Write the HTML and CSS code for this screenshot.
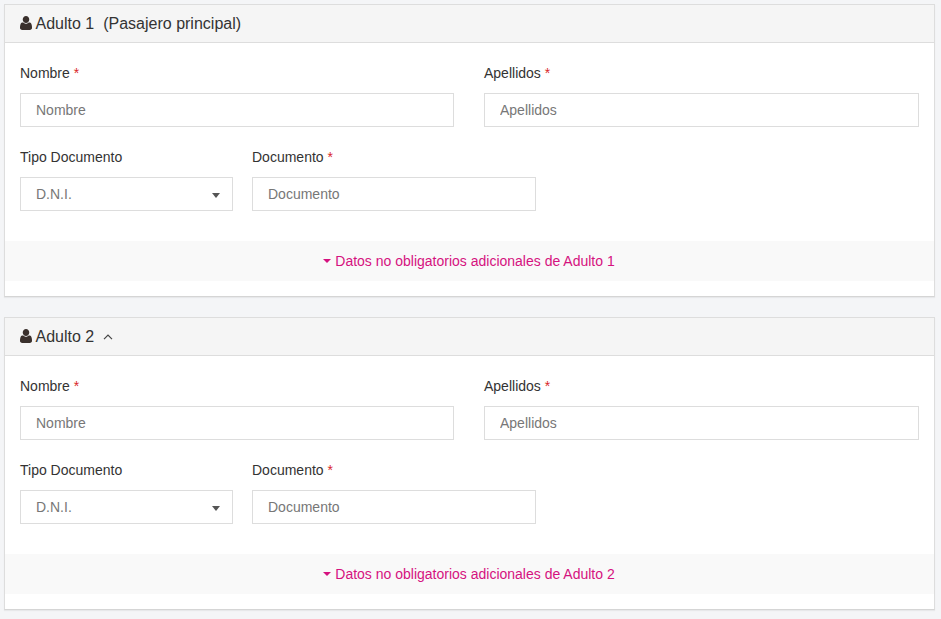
FILE: index.html
```html
<!DOCTYPE html>
<html lang="es">
<head>
  <meta charset="utf-8"/>
  <meta name="viewport" content="width=device-width, initial-scale=1.0"/>
  <title>Datos de pasajeros</title>
  <link rel="stylesheet" href="styles.css">
</head>
<body>
  <section class="passenger">
    <h3 class="passenger-title">
      <svg class="icon-user" viewBox="0 128 1408 1536" preserveAspectRatio="none"><path d="M1408 1405q0 120-73 189.5t-194 69.5h-874q-121 0-194-69.5t-73-189.5q0-53 3.5-103.5t14-109 26.5-108.5 43-97.5 62-81 85.5-53.5 111.5-20q9 0 42 21.5t74.5 48 108 48 133.5 21.5 133.5-21.5 108-48 74.5-48 42-21.5q61 0 111.5 20t85.5 53.5 62 81 43 97.5 26.5 108.5 14 109 3.5 103.5zm-320-893q0 159-112.5 271.5t-271.5 112.5-271.5-112.5-112.5-271.5 112.5-271.5 271.5-112.5 271.5 112.5 112.5 271.5z"/></svg>
      <span>Adulto 1</span>
      <span class="title-note">(Pasajero principal)</span>
    </h3>
    <div class="passenger-body">
      <div class="row-names">
        <div class="field">
          <label>Nombre <em>*</em></label>
          <input type="text" placeholder="Nombre"/>
        </div>
        <div class="field">
          <label>Apellidos <em>*</em></label>
          <input type="text" placeholder="Apellidos"/>
        </div>
      </div>
      <div class="row-doc">
        <div class="field">
          <label>Tipo Documento</label>
          <div class="select-box">D.N.I.<span class="select-caret"></span></div>
        </div>
        <div class="field">
          <label>Documento <em>*</em></label>
          <input type="text" placeholder="Documento"/>
        </div>
      </div>
    </div>
    <a class="extra-link" href="#"><span class="link-caret"></span>Datos no obligatorios adicionales de Adulto 1</a>
  </section>

  <section class="passenger">
    <h3 class="passenger-title">
      <svg class="icon-user" viewBox="0 128 1408 1536" preserveAspectRatio="none"><path d="M1408 1405q0 120-73 189.5t-194 69.5h-874q-121 0-194-69.5t-73-189.5q0-53 3.5-103.5t14-109 26.5-108.5 43-97.5 62-81 85.5-53.5 111.5-20q9 0 42 21.5t74.5 48 108 48 133.5 21.5 133.5-21.5 108-48 74.5-48 42-21.5q61 0 111.5 20t85.5 53.5 62 81 43 97.5 26.5 108.5 14 109 3.5 103.5zm-320-893q0 159-112.5 271.5t-271.5 112.5-271.5-112.5-112.5-271.5 112.5-271.5 271.5-112.5 271.5 112.5 112.5 271.5z"/></svg>
      <span>Adulto 2</span>
      <svg class="icon-chevron" viewBox="0 0 10 6"><path d="M1 5.2 5 1.2l4 4"/></svg>
    </h3>
    <div class="passenger-body">
      <div class="row-names">
        <div class="field">
          <label>Nombre <em>*</em></label>
          <input type="text" placeholder="Nombre"/>
        </div>
        <div class="field">
          <label>Apellidos <em>*</em></label>
          <input type="text" placeholder="Apellidos"/>
        </div>
      </div>
      <div class="row-doc">
        <div class="field">
          <label>Tipo Documento</label>
          <div class="select-box">D.N.I.<span class="select-caret"></span></div>
        </div>
        <div class="field">
          <label>Documento <em>*</em></label>
          <input type="text" placeholder="Documento"/>
        </div>
      </div>
    </div>
    <a class="extra-link" href="#"><span class="link-caret"></span>Datos no obligatorios adicionales de Adulto 2</a>
  </section>
</body>
</html>
```

FILE: styles.css
```css
body {
  margin: 0;
  padding: 4px 6px 9px 4px;
  font-family: "Liberation Sans", Arial, sans-serif;
  font-size: 14px;
  line-height: 20px;
  background: #f4f5f7;
  color: #333;
}
.passenger {
  background: #fff;
  border: 1px solid #ddd;
  border-bottom-color: #d5d5d5;
  box-shadow: 0 1px 1px rgba(0, 0, 0, 0.05);
  margin-bottom: 20px;
  padding-bottom: 15px;
}
.passenger:last-child {
  margin-bottom: 0;
}
.passenger-title {
  display: flex;
  align-items: center;
  height: 37px;
  margin: 0;
  padding: 0 15px 0 14.5px;
  background: #f5f5f5;
  border-bottom: 1px solid #ddd;
  font-size: 16px;
  font-weight: normal;
  color: #333;
}
.icon-user {
  width: 12px;
  height: 14px;
  margin-top: -1px;
  margin-right: 4px;
  fill: #3a302c;
}
.title-note {
  margin-left: 9px;
}
.icon-chevron {
  width: 10px;
  height: 6px;
  margin-left: 9px;
  fill: none;
  stroke: #444;
  stroke-width: 1.2;
}
.passenger-body {
  padding: 20px 15px 30px;
}
.row-names {
  display: grid;
  grid-template-columns: 434px 435px;
  gap: 30px;
  margin-bottom: 20px;
}
.row-doc {
  display: grid;
  grid-template-columns: 213px 284px;
  gap: 19px;
}
.field label {
  display: block;
  margin-bottom: 10px;
}
.field em {
  font-style: normal;
  color: #d9262b;
}
input, .select-box {
  display: block;
  box-sizing: border-box;
  width: 100%;
  height: 34px;
  padding: 6px 15px;
  border: 1px solid #ddd;
  border-radius: 0;
  background: #fff;
  font-family: inherit;
  font-size: 14px;
  line-height: 20px;
  color: #777;
}
input::placeholder {
  color: #777;
  opacity: 1;
}
.select-box {
  position: relative;
}
.select-caret {
  position: absolute;
  right: 12px;
  top: 15px;
  border-top: 5px solid #555;
  border-left: 4.5px solid transparent;
  border-right: 4.5px solid transparent;
}
.extra-link {
  display: block;
  padding: 10px 0;
  background: #f9f9f9;
  text-align: center;
  text-decoration: none;
  color: #d5127f;
}
.link-caret {
  display: inline-block;
  vertical-align: 3px;
  margin-right: 4px;
  margin-left: -1px;
  border-top: 4px solid #d5127f;
  border-left: 4px solid transparent;
  border-right: 4px solid transparent;
}
```
